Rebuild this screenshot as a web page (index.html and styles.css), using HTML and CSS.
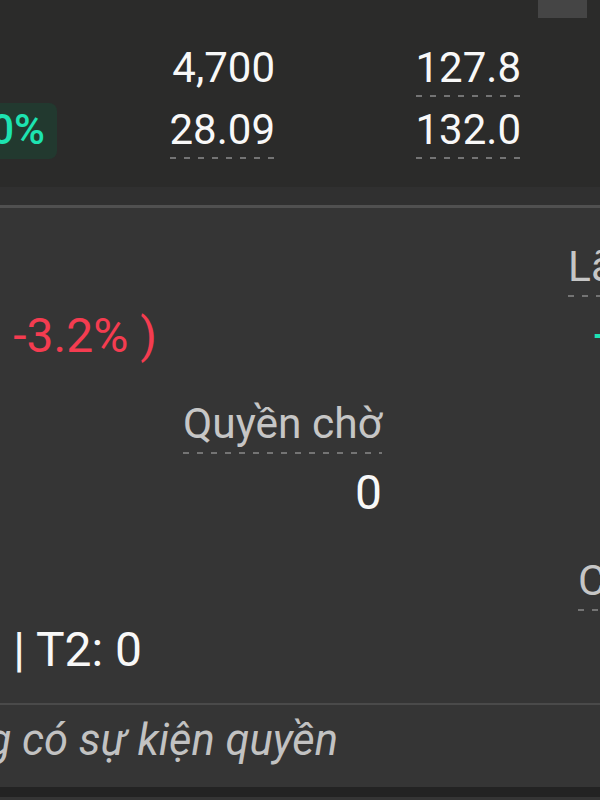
FILE: index.html
```html
<!DOCTYPE html>
<html lang="vi">
<head>
    <meta charset="UTF-8">
    <meta name="viewport" content="width=device-width, initial-scale=1.0">
    <title>Chi tiết mã</title>
    <link rel="stylesheet" href="styles.css">
</head>
<body>

<div class="quote">
    <div class="quote-top">
        <span class="handle"></span>
    </div>
    <div class="quote-grid">
        <div class="cell"></div>
        <div class="cell num"><span class="val">4,700</span></div>
        <div class="cell num"><span class="val dashed">127.8</span></div>
        <div class="cell"></div>

        <div class="cell num"><span class="badge up">+6.90%</span></div>
        <div class="cell num"><span class="val dashed">28.09</span></div>
        <div class="cell num"><span class="val dashed">132.0</span></div>
        <div class="cell"></div>
    </div>
</div>

<div class="divider"></div>

<div class="holdings">
    <!-- row 1 -->
    <div class="item right">
        <span class="label blank">&nbsp;</span>
        <span class="value down">-4,300 (&nbsp; -3.2% )</span>
    </div>
    <div class="item right"></div>
    <div class="item far">
        <span class="label dashed">Lãi/lỗ dự kiến</span>
        <span class="value up offset">+1,250,000</span>
    </div>

    <!-- row 2 -->
    <div class="item right"></div>
    <div class="item right">
        <span class="label dashed">Quyền chờ</span>
        <span class="value">0</span>
    </div>
    <div class="item far"></div>

    <!-- row 3 -->
    <div class="item right shift">
        <span class="label blank">&nbsp;</span>
        <span class="value">T0: 0 | T1: 0 | T2: 0</span>
    </div>
    <div class="item right"></div>
    <div class="item far indent">
        <span class="label dashed">Cổ tức</span>
        <span class="value">&nbsp;</span>
    </div>
</div>

<div class="note">
    <div class="note-inner">
        <span class="note-text">Không có sự kiện quyền</span>
    </div>
</div>

<div class="bottom-bar"></div>

</body>
</html>
```

FILE: styles.css
```css
html, body {
    margin: 0;
    padding: 0;
    overflow: hidden;
}
body {
    width: 600px;
    height: 800px;
    font-family: Roboto, "Noto Sans", Arial, sans-serif;
    background-color: #353535;
    color: #f8f8f8;
}

/* top quote block */
.quote {
    background-color: #2b2b2a;
    height: 187px;
    box-sizing: border-box;
}
.quote-top {
    display: flex;
    justify-content: flex-end;
    padding-right: 13px;
    height: 18px;
}
.handle {
    width: 49px;
    height: 18px;
    background: #454545;
}
.quote-grid {
    display: grid;
    grid-template-columns: 57px 218px 246px 1fr;
    row-gap: 9px;
    margin-top: 26px;
}
.cell {
    display: flex;
    justify-content: flex-end;
    white-space: nowrap;
}
.val {
    font-size: 42px;
    line-height: 48px;
    padding-bottom: 5px;
}
.dashed {
    background-image: linear-gradient(to right, #747474 6px, transparent 6px);
    background-size: 14px 2px;
    background-repeat: repeat-x;
    background-position: left bottom;
}
.badge {
    font-size: 42px;
    font-weight: 500;
    line-height: 53px;
    margin-top: -3px;
    padding: 0 12px 0 10px;
    border-radius: 8px;
    background: #22392f;
}
.badge.up {
    color: #1de3b1;
}

/* separator between blocks */
.divider {
    height: 18px;
    background: #303030;
    border-bottom: 3px solid #505050;
}

/* holdings panel */
.holdings {
    display: grid;
    grid-template-columns: 157px 225px 1fr;
    row-gap: 36px;
    padding: 35px 0 25px;
    height: 495px;
    box-sizing: border-box;
}
.item {
    display: flex;
    flex-direction: column;
    white-space: nowrap;
}
.item.right {
    align-items: flex-end;
}
.item.far {
    align-items: flex-start;
    padding-left: 186px;
}
.item.far.indent {
    padding-left: 196px;
}
.item.shift {
    padding-right: 15px;
}
.label {
    font-size: 42.5px;
    line-height: 48px;
    padding-bottom: 6px;
    color: #c6c6c6;
    margin-bottom: 11px;
}
.label.blank {
    visibility: hidden;
}
.value {
    font-size: 48px;
    line-height: 56px;
    color: #f8f8f8;
}
.value.down {
    color: #f43c50;
}
.value.up {
    color: #1de3b1;
}
.value.offset {
    margin-left: 25px;
}

/* footer note */
.note {
    border-top: 2px solid #4a4a4a;
    height: 84px;
    box-sizing: border-box;
}
.note-inner {
    display: flex;
    justify-content: flex-end;
    width: 338px;
}
.note-text {
    font-size: 43.5px;
    font-style: italic;
    line-height: 72px;
    color: #c2c2c2;
    white-space: nowrap;
}
.bottom-bar {
    height: 10px;
    background: #232323;
}
```
